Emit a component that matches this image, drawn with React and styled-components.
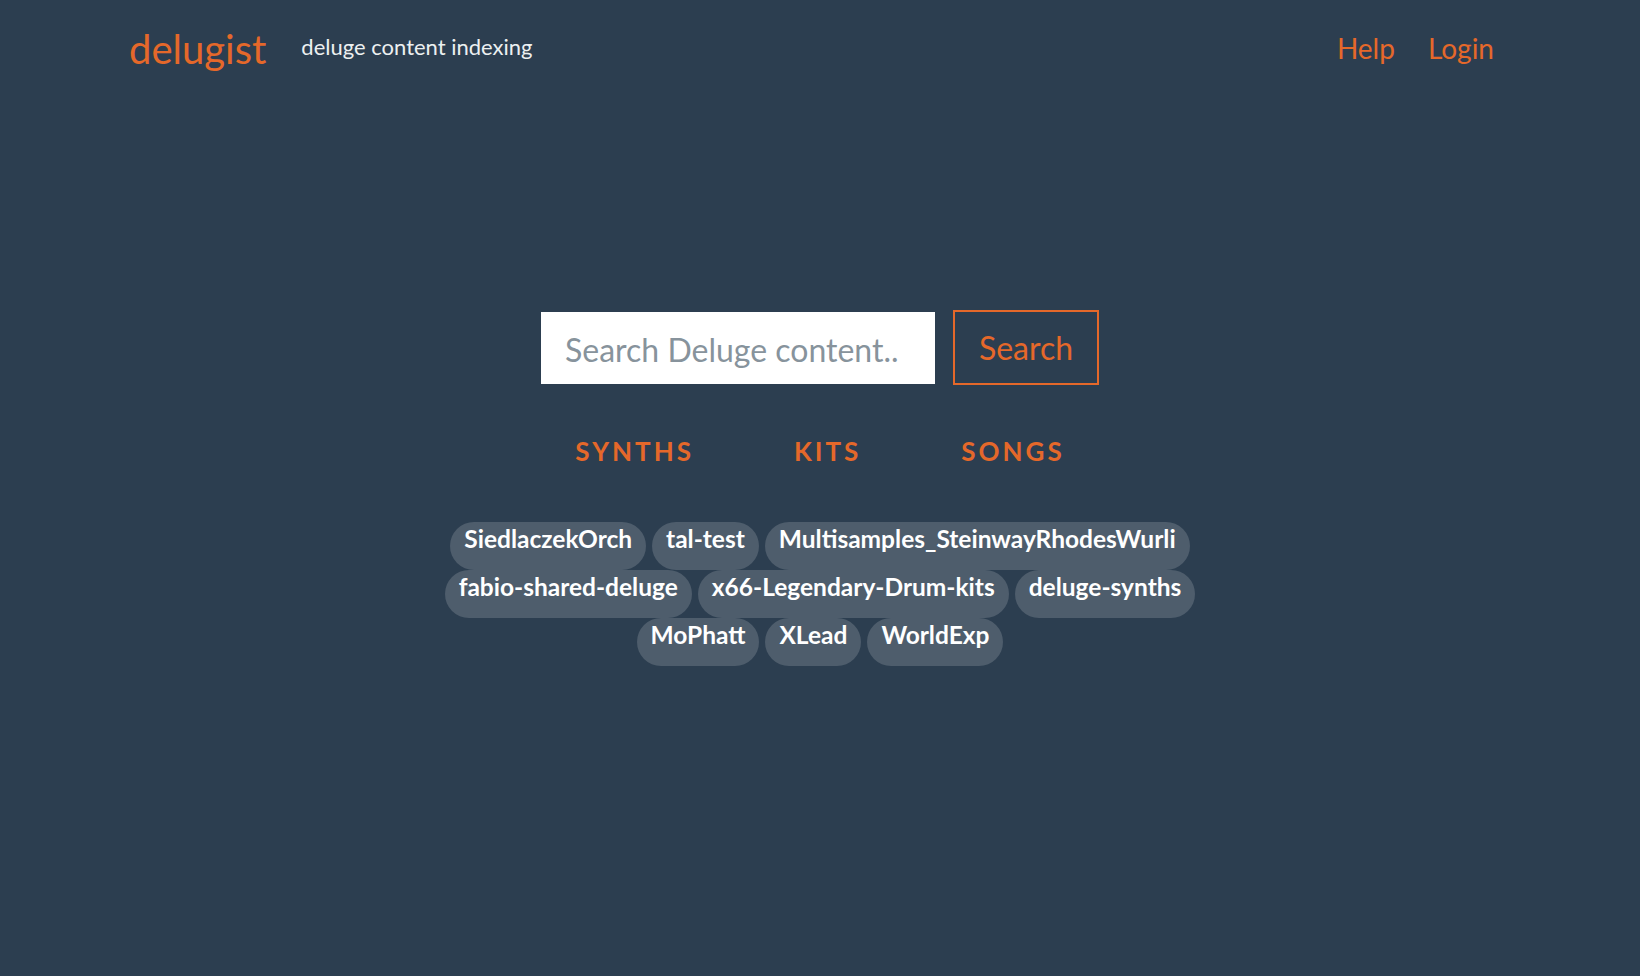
import React from "react";
import styled, { createGlobalStyle } from "styled-components";

const orange = "#e5682a";

const GlobalStyle = createGlobalStyle`
  html, body {
    margin: 0;
    padding: 0;
    background: #2c3e50;
    font-family: Lato, "Noto Sans", sans-serif;
  }
  * {
    box-sizing: border-box;
  }
`;

const Page = styled.div`
  min-height: 976px;
  background: #2c3e50;
`;

const Header = styled.header`
  height: 98px;
  display: flex;
  align-items: center;
  padding: 0 146px 0 129px;
`;

const Brand = styled.a`
  font-size: 40px;
  line-height: 1.2;
  color: ${orange};
  text-decoration: none;
`;

const Tagline = styled.span`
  margin-left: 35px;
  margin-top: -3px;
  font-size: 22px;
  line-height: 1.2;
  color: #ecf0f1;
`;

const NavLinks = styled.nav`
  margin-left: auto;
  display: flex;
  gap: 33px;
`;

const NavLink = styled.a`
  font-size: 28px;
  line-height: 1.2;
  color: ${orange};
  text-decoration: none;
`;

const Main = styled.main`
  display: flex;
  flex-direction: column;
  align-items: center;
  padding-top: 212px;
`;

const SearchForm = styled.form`
  display: flex;
  align-items: center;
  gap: 18px;
`;

const SearchInput = styled.input`
  width: 394px;
  height: 72px;
  border: none;
  outline: none;
  background: #fff;
  padding: 4px 24px 0;
  font-family: Lato, "Noto Sans", sans-serif;
  font-size: 32px;
  color: #2c3e50;

  &::placeholder {
    color: #87939c;
  }
`;

const SearchButton = styled.button`
  width: 146px;
  height: 75px;
  background: transparent;
  border: 2px solid ${orange};
  color: ${orange};
  font-family: Lato, "Noto Sans", sans-serif;
  font-size: 32px;
  cursor: pointer;
`;

const Tabs = styled.div`
  display: flex;
  gap: 100px;
  margin-top: 51px;
`;

const Tab = styled.a`
  font-size: 26px;
  line-height: 1.2;
  font-weight: 700;
  letter-spacing: 0.115em;
  color: ${orange};
  text-transform: uppercase;
  text-decoration: none;
`;

const TagCloud = styled.div`
  width: 800px;
  margin-top: 55px;
  display: flex;
  flex-wrap: wrap;
  justify-content: center;
  column-gap: 6px;
  row-gap: 0;
`;

const Tag = styled.a`
  display: inline-block;
  height: 48px;
  padding: 2px 14px 0;
  border-radius: 24px;
  background: #4e5d6c;
  color: #fff;
  font-size: 24.5px;
  font-weight: 700;
  line-height: 1.2;
  text-decoration: none;
`;

const tags = [
  "SiedlaczekOrch",
  "tal-test",
  "Multisamples_SteinwayRhodesWurli",
  "fabio-shared-deluge",
  "x66-Legendary-Drum-kits",
  "deluge-synths",
  "MoPhatt",
  "XLead",
  "WorldExp",
];

export default function App() {
  return (
    <Page>
      <GlobalStyle />
      <Header>
        <Brand href="#">delugist</Brand>
        <Tagline>deluge content indexing</Tagline>
        <NavLinks>
          <NavLink href="#">Help</NavLink>
          <NavLink href="#">Login</NavLink>
        </NavLinks>
      </Header>
      <Main>
        <SearchForm onSubmit={(e) => e.preventDefault()}>
          <SearchInput placeholder="Search Deluge content.." />
          <SearchButton type="submit">Search</SearchButton>
        </SearchForm>
        <Tabs>
          <Tab href="#">Synths</Tab>
          <Tab href="#">Kits</Tab>
          <Tab href="#">Songs</Tab>
        </Tabs>
        <TagCloud>
          {tags.map((t) => (
            <Tag key={t} href="#">
              {t}
            </Tag>
          ))}
        </TagCloud>
      </Main>
    </Page>
  );
}
